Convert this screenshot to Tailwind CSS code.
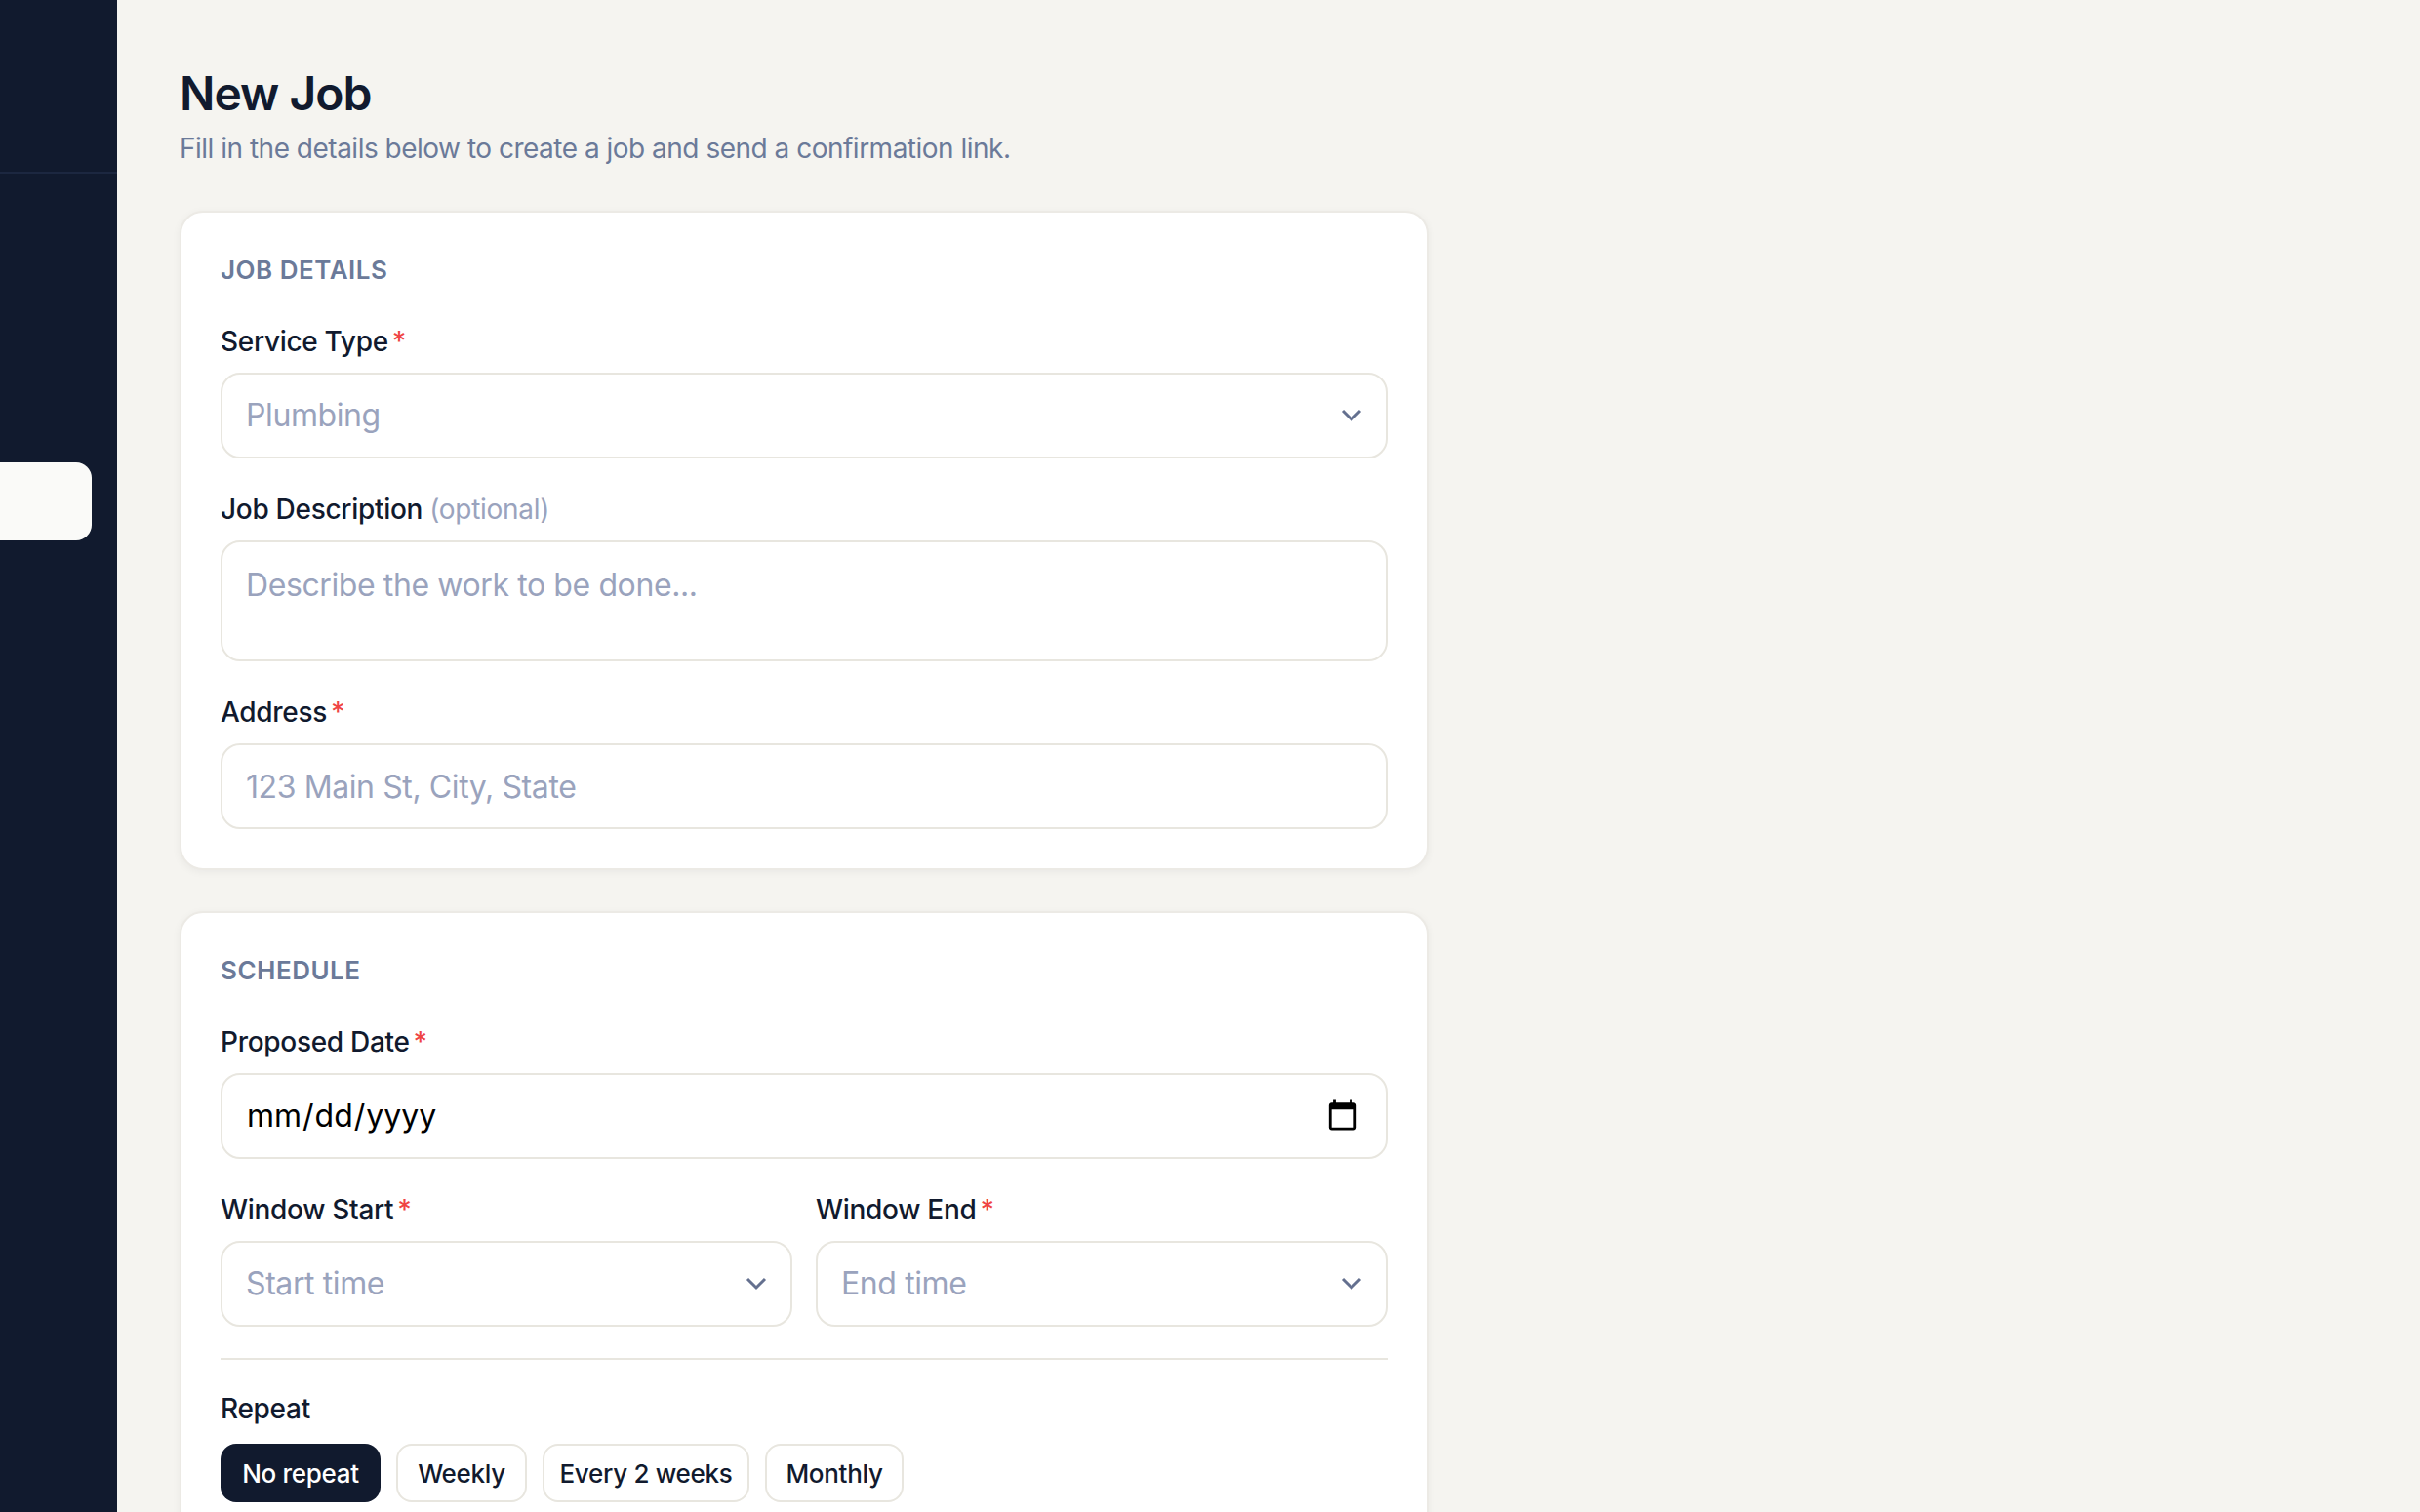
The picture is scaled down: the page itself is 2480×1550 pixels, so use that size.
<!DOCTYPE html>
<html lang="en">
<head>
  <meta charset="UTF-8" />
  <title>New Job</title>
  <script src="https://cdn.jsdelivr.net/npm/@tailwindcss/browser@4"></script>
</head>
<body class="bg-[#f5f4f0] font-['Inter',sans-serif] text-[#111a2e]">
  <div class="flex h-[1550px] overflow-hidden">
    <!-- sidebar, labels are cut off in the shot -->
    <aside class="w-[120px] shrink-0 bg-[#111a2e]">
      <div class="h-[178px] border-b-2 border-[#1c2740]"></div>
      <div class="mt-[296px] h-[80px] w-[94px] rounded-r-[16px] bg-[#fafaf8]"></div>
    </aside>

    <main class="pl-[64px] pt-[64px]">
      <h1 class="text-[48px] leading-[64px] font-semibold tracking-[-1px]">New Job</h1>
      <p class="mt-[4px] text-[28px] leading-[40px] text-[#6b7a99] tracking-[-0.5px]">Fill in the details below to create a job and send a confirmation link.</p>

      <section class="mt-[44px] w-[1280px] rounded-[24px] border-2 border-[#eceae5] bg-white px-[40px] pt-[40px] pb-[40px] shadow-[0_2px_8px_rgba(17,26,46,0.05)]">
        <h2 class="mb-[36px] text-[26px] leading-[38px] font-semibold tracking-[0.5px] text-[#6b7a99]">JOB DETAILS</h2>

        <label class="mb-[14px] block text-[28px] leading-[36px] font-medium tracking-[-0.3px]">Service Type<span class="ml-[4px] text-[#ef4444]">*</span></label>
        <div class="relative mb-[34px]">
          <select class="h-[88px] w-full appearance-none rounded-[20px] border-2 border-[#e8e6df] bg-white px-[24px] text-[32px] text-[#9aa3bd] tracking-[-0.4px]">
            <option>Plumbing</option>
          </select>
          <svg class="absolute right-[26px] top-[37px] h-[14px] w-[22px]" viewBox="0 0 22 14" fill="none" stroke="#64708f" stroke-width="3"><path d="M2 2l9 9 9-9" /></svg>
        </div>

        <label class="mb-[14px] block text-[28px] leading-[36px] font-medium tracking-[-0.3px]">Job Description <span class="font-normal text-[#9aa3bd]">(optional)</span></label>
        <textarea rows="2" placeholder="Describe the work to be done..." class="mb-[34px] block h-[124px] w-full resize-none rounded-[20px] border-2 border-[#e8e6df] bg-white px-[24px] pt-[20px] text-[32px] tracking-[-0.4px] placeholder:text-[#9aa3bd]"></textarea>

        <label class="mb-[14px] block text-[28px] leading-[36px] font-medium tracking-[-0.3px]">Address<span class="ml-[4px] text-[#ef4444]">*</span></label>
        <input type="text" placeholder="123 Main St, City, State" class="block h-[88px] w-full rounded-[20px] border-2 border-[#e8e6df] bg-white px-[24px] text-[32px] tracking-[-0.4px] placeholder:text-[#9aa3bd]" />
      </section>

      <section class="mt-[42px] w-[1280px] rounded-[24px] border-2 border-[#eceae5] bg-white px-[40px] pt-[40px] pb-[40px] shadow-[0_2px_8px_rgba(17,26,46,0.05)]">
        <h2 class="mb-[36px] text-[26px] leading-[38px] font-semibold tracking-[0.5px] text-[#6b7a99]">SCHEDULE</h2>

        <label class="mb-[14px] block text-[28px] leading-[36px] font-medium tracking-[-0.3px]">Proposed Date<span class="ml-[4px] text-[#ef4444]">*</span></label>
        <input type="date" class="mb-[34px] block h-[88px] w-full rounded-[20px] border-2 border-[#e8e6df] bg-white px-[24px] text-[32px] text-black [&::-webkit-calendar-picker-indicator]:h-[36px] [&::-webkit-calendar-picker-indicator]:w-[36px]" />

        <div class="mb-[32px] grid grid-cols-2 gap-[24px] border-b-2 border-[#e8e6df] pb-[32px]">
          <div>
            <label class="mb-[14px] block text-[28px] leading-[36px] font-medium tracking-[-0.3px]">Window Start<span class="ml-[4px] text-[#ef4444]">*</span></label>
            <div class="relative">
              <select class="h-[88px] w-full appearance-none rounded-[20px] border-2 border-[#e8e6df] bg-white px-[24px] text-[32px] text-[#9aa3bd] tracking-[-0.4px]">
                <option>Start time</option>
              </select>
              <svg class="absolute right-[26px] top-[37px] h-[14px] w-[22px]" viewBox="0 0 22 14" fill="none" stroke="#64708f" stroke-width="3"><path d="M2 2l9 9 9-9" /></svg>
            </div>
          </div>
          <div>
            <label class="mb-[14px] block text-[28px] leading-[36px] font-medium tracking-[-0.3px]">Window End<span class="ml-[4px] text-[#ef4444]">*</span></label>
            <div class="relative">
              <select class="h-[88px] w-full appearance-none rounded-[20px] border-2 border-[#e8e6df] bg-white px-[24px] text-[32px] text-[#9aa3bd] tracking-[-0.4px]">
                <option>End time</option>
              </select>
              <svg class="absolute right-[26px] top-[37px] h-[14px] w-[22px]" viewBox="0 0 22 14" fill="none" stroke="#64708f" stroke-width="3"><path d="M2 2l9 9 9-9" /></svg>
            </div>
          </div>
        </div>

        <label class="mb-[18px] block text-[28px] leading-[36px] font-medium tracking-[-0.3px]">Repeat</label>
        <div class="flex gap-[16px] text-[26px] font-medium tracking-[-0.3px]">
          <button class="h-[60px] w-[164px] rounded-[16px] bg-[#111a2e] text-white">No repeat</button>
          <button class="h-[60px] w-[134px] rounded-[16px] border-2 border-[#e8e6df] bg-white">Weekly</button>
          <button class="h-[60px] w-[212px] rounded-[16px] border-2 border-[#e8e6df] bg-white">Every 2 weeks</button>
          <button class="h-[60px] w-[142px] rounded-[16px] border-2 border-[#e8e6df] bg-white">Monthly</button>
        </div>
      </section>
    </main>
  </div>
</body>
</html>
